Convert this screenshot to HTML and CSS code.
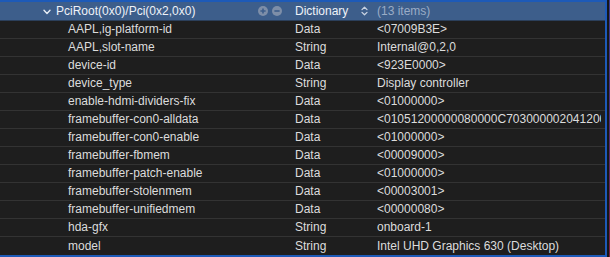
FILE: index.html
```html
<!DOCTYPE html>
<html>
<head>
<meta charset="utf-8">
<link rel="stylesheet" href="styles.css">
</head>
<body>
<div class="screen">
  <div class="table">
    <div class="row header">
      <div class="key">
        <svg class="chev" width="8" height="6" viewBox="0 0 8 6"><path d="M1 1.2 L4 4.4 L7 1.2" fill="none" stroke="#e6ecf4" stroke-width="1.4" stroke-linecap="round" stroke-linejoin="round"/></svg>
        <span class="keytext">PciRoot(0x0)/Pci(0x2,0x0)</span>
        <span class="btns">
          <svg width="10" height="10" viewBox="0 0 10 10"><circle cx="5" cy="5" r="5" fill="#7d8ea8"/><path d="M5 2.4 V7.6 M2.4 5 H7.6" stroke="#3c5d8a" stroke-width="1.6"/></svg>
          <svg width="10" height="10" viewBox="0 0 10 10"><circle cx="5" cy="5" r="5" fill="#7d8ea8"/><path d="M2.4 5 H7.6" stroke="#3c5d8a" stroke-width="1.6"/></svg>
        </span>
      </div>
      <div class="type">
        <span>Dictionary</span>
        <svg class="stepper" width="7" height="10" viewBox="0 0 7 10"><path d="M1 3.6 L3.5 1.2 L6 3.6 M1 6.4 L3.5 8.8 L6 6.4" fill="none" stroke="#c9d3e2" stroke-width="1.3" stroke-linecap="round" stroke-linejoin="round"/></svg>
      </div>
      <div class="value muted"><span>(13 items)</span></div>
    </div>
    <div class="row"><div class="key">AAPL,ig-platform-id</div><div class="type">Data</div><div class="value"><span>&lt;07009B3E&gt;</span></div></div>
    <div class="row"><div class="key">AAPL,slot-name</div><div class="type">String</div><div class="value"><span>Internal@0,2,0</span></div></div>
    <div class="row"><div class="key">device-id</div><div class="type">Data</div><div class="value"><span>&lt;923E0000&gt;</span></div></div>
    <div class="row"><div class="key">device_type</div><div class="type">String</div><div class="value"><span>Display controller</span></div></div>
    <div class="row"><div class="key">enable-hdmi-dividers-fix</div><div class="type">Data</div><div class="value"><span>&lt;01000000&gt;</span></div></div>
    <div class="row"><div class="key">framebuffer-con0-alldata</div><div class="type">Data</div><div class="value"><span>&lt;01051200000080000C7030000020412000000000000000000&gt;</span></div></div>
    <div class="row"><div class="key">framebuffer-con0-enable</div><div class="type">Data</div><div class="value"><span>&lt;01000000&gt;</span></div></div>
    <div class="row"><div class="key">framebuffer-fbmem</div><div class="type">Data</div><div class="value"><span>&lt;00009000&gt;</span></div></div>
    <div class="row"><div class="key">framebuffer-patch-enable</div><div class="type">Data</div><div class="value"><span>&lt;01000000&gt;</span></div></div>
    <div class="row"><div class="key">framebuffer-stolenmem</div><div class="type">Data</div><div class="value"><span>&lt;00003001&gt;</span></div></div>
    <div class="row"><div class="key">framebuffer-unifiedmem</div><div class="type">Data</div><div class="value"><span>&lt;00000080&gt;</span></div></div>
    <div class="row"><div class="key">hda-gfx</div><div class="type">String</div><div class="value"><span>onboard-1</span></div></div>
    <div class="row last"><div class="key">model</div><div class="type">String</div><div class="value"><span>Intel UHD Graphics 630 (Desktop)</span></div></div>
  </div>
  <div class="gap"></div>
  <div class="wall"></div>
</div>
</body>
</html>
```

FILE: styles.css
```css
html, body {
  margin: 0;
  padding: 0;
  background: #1e1e1e;
}
body {
  font-family: "Liberation Sans", Arial, sans-serif;
  font-size: 12px;
  color: #dcdcdc;
  width: 610px;
  height: 257px;
  overflow: hidden;
}
.screen {
  display: flex;
  height: 257px;
}
.table {
  flex: 0 0 605px;
  box-sizing: border-box;
  width: 607px;
  flex-basis: 607px;
  border-top: 2px solid #1d5ab8;
  border-right: 2px solid #1d5ab8;
  border-bottom: 2px solid #1d5ab8;
  background: #1e1e1e;
  display: flex;
  flex-direction: column;
}
.gap {
  flex: 0 0 2px;
  background: #161616;
}
.wall {
  flex: 1;
  background: linear-gradient(to bottom, #3a3a8e 0%, #4a2c78 45%, #7a1f3e 100%);
}
.row {
  display: grid;
  grid-template-columns: 295px 82px 1fr;
  height: 17px;
  border-bottom: 1px solid #333333;
  align-items: center;
  line-height: 17px;
}
.row.last {
  border-bottom: none;
  height: 18px;
}
.row.header {
  height: 18px;
  line-height: 18px;
  background: #3d5e8b;
  color: #eef2f8;
  border-bottom: 1px solid #2b3f5a;
}
.key {
  padding-left: 68px;
  white-space: nowrap;
  overflow: hidden;
}
.header .key {
  padding-left: 43px;
  padding-right: 13px;
  display: flex;
  align-items: center;
}
.chev {
  display: block;
  margin-right: 5px;
  margin-top: 1px;
}
.btns {
  margin-left: auto;
  display: flex;
  gap: 4px;
  align-items: center;
}
.btns svg {
  display: block;
}
.type {
  white-space: nowrap;
}
.header .type {
  display: flex;
  align-items: center;
  padding-right: 9px;
}
.stepper {
  margin-left: auto;
  display: block;
}
.value {
  white-space: nowrap;
  overflow: hidden;
  margin-right: 4px;
}
.value.muted {
  color: #9aacc6;
}
```
